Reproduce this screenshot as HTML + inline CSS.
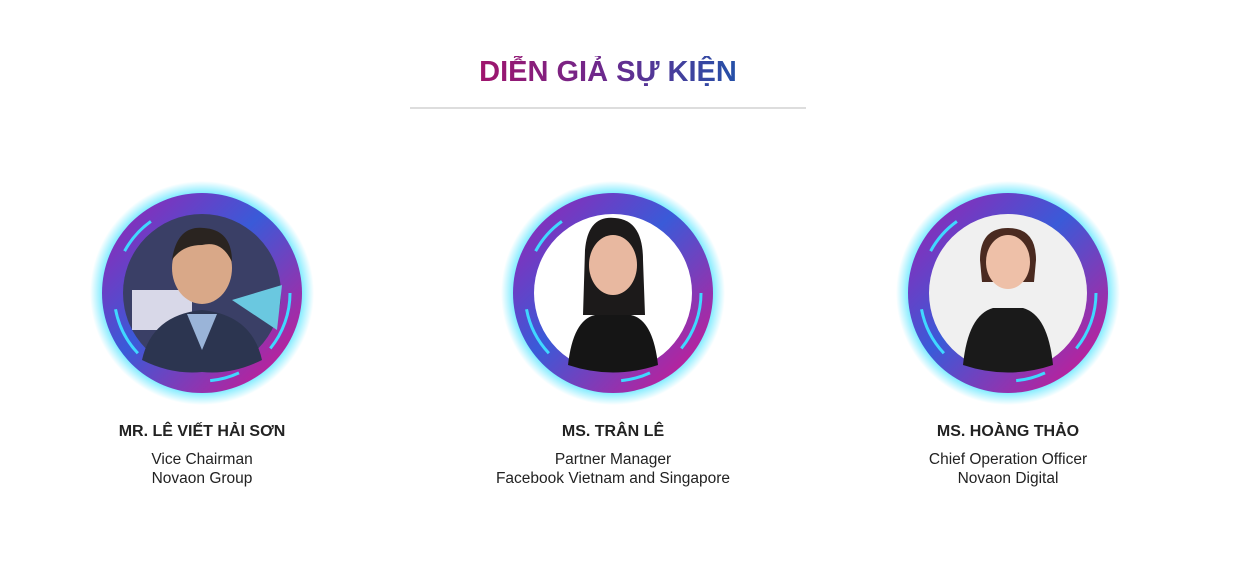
<!DOCTYPE html><html><head><meta charset="utf-8"><style>
body{margin:0;width:1238px;height:569px;background:#fff;font-family:"Liberation Sans",sans-serif;position:relative;overflow:hidden}
h1{position:absolute;left:0;width:1216px;top:52px;margin:0;text-align:center;font-size:29px;font-weight:bold;line-height:40px}
h1 span{background:linear-gradient(90deg,#a0146c,#6a2a8e 50%,#2450a8);-webkit-background-clip:text;color:transparent}
.line{position:absolute;left:410px;top:107px;width:396px;height:2px;background:#ddd}
.sp{position:absolute;top:190px;width:260px;text-align:center}
.sp svg{display:block;margin:0 auto;overflow:visible}
.n{margin-top:12px;font-weight:bold;font-size:16px;color:#222;line-height:20px}
.r{margin-top:8px;font-size:15.5px;color:#222;line-height:19px}
</style></head><body>
<h1><span>DIỄN GIẢ SỰ KIỆN</span></h1><div class="line"></div>
<svg width="0" height="0" style="position:absolute"><defs>
<linearGradient id="rg" x1="0" y1="0" x2="1" y2="1"><stop offset="0" stop-color="#a020b0"/><stop offset=".45" stop-color="#3a5ad8"/><stop offset="1" stop-color="#e0108a"/></linearGradient>
<radialGradient id="gl"><stop offset=".84" stop-color="#30e0ff" stop-opacity=".9"/><stop offset="1" stop-color="#40e0ff" stop-opacity="0"/></radialGradient>
</defs></svg>
<div class="sp" style="left:72px">
<svg width="220" height="220" viewBox="0 0 220 220"><circle cx="110" cy="103" r="112" fill="url(#gl)"/><circle cx="110" cy="103" r="100" fill="url(#rg)"/>
<circle cx="110" cy="103" r="88" fill="none" stroke="#40d8ff" stroke-width="3" stroke-dasharray="60 40 30 80 50 60 40 200"/>
<circle cx="110" cy="103" r="79" fill="#3a3f66"/><rect x="40" y="100" width="60" height="40" fill="#d8d8e8"/><path d="M140 110 L190 95 L185 140 Z" fill="#6ac8e0"/>
<ellipse cx="110" cy="78" rx="30" ry="36" fill="#d9a888"/><path d="M80 70 Q85 35 112 38 Q140 40 140 72 Q130 50 110 55 Q90 55 80 70Z" fill="#2a2420"/>
<path d="M50 170 Q60 125 110 120 Q160 125 170 170 Q140 185 110 182 Q80 185 50 170Z" fill="#2c3550"/><path d="M95 124 L110 160 L125 124Z" fill="#9ab4d8"/></svg>
<div class="n">MR. LÊ VIẾT HẢI SƠN</div><div class="r">Vice Chairman<br>Novaon Group</div></div>
<div class="sp" style="left:483px">
<svg width="220" height="220" viewBox="0 0 220 220"><circle cx="110" cy="103" r="112" fill="url(#gl)"/><circle cx="110" cy="103" r="100" fill="url(#rg)"/>
<circle cx="110" cy="103" r="88" fill="none" stroke="#40d8ff" stroke-width="3" stroke-dasharray="60 40 30 80 50 60 40 200"/>
<circle cx="110" cy="103" r="79" fill="#fff"/><path d="M82 60 Q85 25 112 28 Q140 30 140 70 L142 125 L80 125Z" fill="#1c1a1a"/>
<ellipse cx="110" cy="75" rx="24" ry="30" fill="#e8b8a0"/><path d="M65 175 Q70 130 92 125 L128 125 Q150 130 155 175 Q110 190 65 175Z" fill="#151515"/></svg>
<div class="n">MS. TRÂN LÊ</div><div class="r">Partner Manager<br>Facebook Vietnam and Singapore</div></div>
<div class="sp" style="left:878px">
<svg width="220" height="220" viewBox="0 0 220 220"><circle cx="110" cy="103" r="112" fill="url(#gl)"/><circle cx="110" cy="103" r="100" fill="url(#rg)"/>
<circle cx="110" cy="103" r="88" fill="none" stroke="#40d8ff" stroke-width="3" stroke-dasharray="60 40 30 80 50 60 40 200"/>
<circle cx="110" cy="103" r="79" fill="#f0f0f0"/><path d="M82 70 Q82 38 110 38 Q138 38 138 70 L136 92 L84 92Z" fill="#4a2a20"/>
<ellipse cx="110" cy="72" rx="22" ry="27" fill="#eec0a8"/><path d="M65 175 Q70 125 95 118 L125 118 Q150 125 155 175 Q110 190 65 175Z" fill="#1a1a1a"/></svg>
<div class="n">MS. HOÀNG THẢO</div><div class="r">Chief Operation Officer<br>Novaon Digital</div></div>
</body></html>
